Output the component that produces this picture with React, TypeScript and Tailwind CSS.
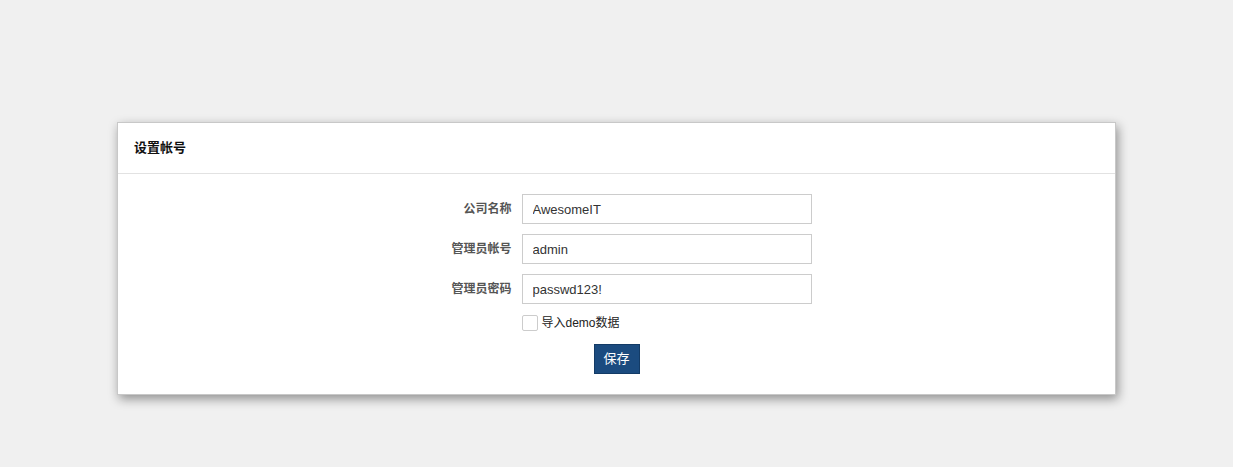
export default function App() {
  const fields = [
    { label: '公司名称', value: 'AwesomeIT' },
    { label: '管理员帐号', value: 'admin' },
    { label: '管理员密码', value: 'passwd123!' },
  ]

  return (
    <div
      className="min-h-[467px] bg-[#f0f0f0] pt-[122px]"
      style={{ fontFamily: '"Liberation Sans", "Noto Sans CJK SC", sans-serif' }}
    >
      <div className="mx-auto w-[999px] border border-[#c8c8c8] bg-white shadow-[2px_4px_10px_rgba(0,0,0,0.4)]">
        {/* Header */}
        <div className="flex h-[51px] items-center border-b border-[#e2e2e2] px-4">
          <h3 className="text-[13px] font-bold text-[#111]">设置帐号</h3>
        </div>

        {/* Form */}
        <div className="flex flex-col items-center pt-5 pb-5">
          <div className="flex flex-col gap-[10px]">
            {fields.map((f) => (
              <div key={f.label} className="flex items-center">
                <label className="w-[100px] pr-[10px] text-right text-[12px] font-bold text-[#555]">
                  {f.label}
                </label>
                <input
                  readOnly
                  value={f.value}
                  className="h-[30px] w-[290px] border border-[#ccc] px-[10px] text-[13px] text-[#333] outline-none"
                />
              </div>
            ))}
            <div className="flex items-center pl-[100px]">
              <span className="h-4 w-4 rounded-[2px] border border-[#ccc] bg-white" />
              <span className="ml-[4px] text-[12px] text-[#222]">导入demo数据</span>
            </div>
          </div>
          <button className="mt-[12px] h-[30px] w-[46px] border border-[#133b66] bg-[#1b4b7f] text-[13px] text-white">
            保存
          </button>
        </div>
      </div>
    </div>
  )
}
